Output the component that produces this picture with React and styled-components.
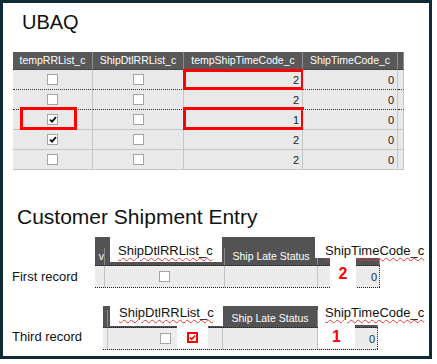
import React from 'react';
import styled, { createGlobalStyle } from 'styled-components';

const GlobalStyle = createGlobalStyle`
  html, body {
    margin: 0;
    padding: 0;
    background: #fff;
  }
  body {
    font-family: "Liberation Sans", Arial, sans-serif;
  }
`;

const Frame = styled.div`
  box-sizing: border-box;
  width: 432px;
  height: 359px;
  border: 3px solid #0f2b36;
  background: #fff;
  overflow: hidden;
`;

const Title = styled.h1`
  margin: ${p => p.$top}px 0 0 ${p => p.$left}px;
  font-size: ${p => p.$size}px;
  line-height: ${p => p.$line}px;
  font-weight: 400;
  color: #111;
`;

/* ---------- UBAQ grid ---------- */

const Grid = styled.div`
  display: grid;
  grid-template-columns: 80px 91px 119px 95px 6px;
  width: 391px;
  margin: 18px 0 0 10px;
  font-size: 10.5px;
`;

const HeadCell = styled.div`
  box-sizing: border-box;
  height: 18px;
  line-height: 17px;
  background: #595959;
  color: #fff;
  text-align: center;
  white-space: nowrap;
  overflow: hidden;
  border-right: 1px solid #8d8d8d;
  border-bottom: 1px dotted #333;
`;

const Cell = styled.div`
  position: relative;
  box-sizing: border-box;
  height: 20px;
  display: flex;
  align-items: center;
  justify-content: ${p => (p.$num ? 'flex-end' : 'center')};
  padding-right: ${p => (p.$num ? '3px' : '0')};
  background: #e9e9e9;
  color: #222;
  font-size: 11px;
  border-right: 1px solid #c6c6c6;
  border-bottom: 1px ${p => (p.$dotted ? 'dotted #333' : 'solid #c6c6c6')};
`;

const Mark = styled.span`
  position: absolute;
  top: ${p => p.$t}px;
  bottom: -1px;
  left: ${p => p.$l}px;
  right: ${p => p.$r}px;
  border: 3px solid #ff0000;
  pointer-events: none;
`;

const Box = styled.span`
  box-sizing: border-box;
  display: inline-flex;
  align-items: center;
  justify-content: center;
  width: 11px;
  height: 11px;
  background: #fff;
  border: 1px solid #a4a4a4;
`;

const RedBox = styled.span`
  box-sizing: border-box;
  display: inline-flex;
  align-items: center;
  justify-content: center;
  width: 11px;
  height: 11px;
  background: #fff;
  border: 2px solid #ff0000;
`;

const Check = ({ color = '#111' }) => (
  <svg width="8" height="7" viewBox="0 0 8 7">
    <path d="M1 3.6 L3 5.6 L7 1.2" fill="none" stroke={color} strokeWidth="1.8" />
  </svg>
);

const rows = [
  { a: false, c: 2, dotted: true, markC: -1 },
  { a: false, c: 2, dotted: true },
  { a: true, c: 1, markA: true, markC: -3 },
  { a: true, c: 2 },
  { a: false, c: 2 },
];

/* ---------- Customer Shipment Entry fragments ---------- */

const Record = styled.div`
  display: flex;
  align-items: flex-end;
  margin-top: ${p => p.$top}px;
`;

const RecordLabel = styled.div`
  box-sizing: border-box;
  width: ${p => p.$w}px;
  padding-left: 9px;
  height: 22px;
  line-height: ${p => p.$line}px;
  font-size: 13px;
  color: #111;
  flex-shrink: 0;
`;

const Piece = styled.div`
  position: relative;
  width: ${p => p.$w}px;
`;

const PieceHead = styled.div`
  display: grid;
  grid-template-columns: ${p => p.$cols};
  padding-top: ${p => p.$band}px;
  background: #535353;
  border-bottom: 1px dotted #222;
`;

const PieceHeadCell = styled.div`
  box-sizing: border-box;
  height: 17px;
  line-height: 17px;
  color: #fff;
  font-size: 10.5px;
  text-align: ${p => p.$align || 'center'};
  white-space: nowrap;
  overflow: hidden;
  border-right: 1px solid #8a8a8a;
`;

const PieceRow = styled.div`
  display: grid;
  grid-template-columns: ${p => p.$cols};
  height: 21px;
  background: #ececec;
  border-bottom: 1px dotted #222;
`;

const PieceCell = styled.div`
  box-sizing: border-box;
  display: flex;
  align-items: center;
  justify-content: ${p => (p.$num ? 'flex-end' : 'center')};
  padding-right: ${p => (p.$num ? '2px' : '0')};
  font-size: 11px;
  color: #1a2a4a;
  border-right: 1px ${p => (p.$last ? 'dotted #333' : 'solid #c4c4c4')};
`;

const Annot = styled.div`
  position: absolute;
  box-sizing: border-box;
  left: ${p => p.$x}px;
  top: ${p => p.$y}px;
  width: ${p => p.$w}px;
  height: ${p => p.$h}px;
  padding: ${p => p.$pt || 0}px 0 0 ${p => p.$pl || 0}px;
  background: #fff;
  font-size: 13px;
  line-height: 15px;
  color: #111;
  white-space: nowrap;
  display: ${p => (p.$center ? 'flex' : 'block')};
  align-items: center;
  justify-content: center;
`;

const Squiggle = styled.span`
  text-decoration: underline wavy #e23b3b;
  text-decoration-thickness: 1px;
  text-underline-offset: 2px;
`;

const RedNum = styled.span`
  color: #ff0000;
  font-weight: 700;
  font-size: 16px;
  line-height: 16px;
`;

export default function App() {
  return (
    <>
      <GlobalStyle />
      <Frame>
        <Title $top={7} $left={19} $size={20} $line={24}>UBAQ</Title>

        <Grid>
          <HeadCell>tempRRList_c</HeadCell>
          <HeadCell>ShipDtlRRList_c</HeadCell>
          <HeadCell>tempShipTimeCode_c</HeadCell>
          <HeadCell>ShipTimeCode_c</HeadCell>
          <HeadCell />
          {rows.map((r, i) => (
            <React.Fragment key={i}>
              <Cell $dotted={r.dotted}>
                <Box>{r.a && <Check />}</Box>
                {r.markA && <Mark $t={-3} $l={7} $r={15} />}
              </Cell>
              <Cell $dotted={r.dotted}>
                <Box />
              </Cell>
              <Cell $num $dotted={r.dotted}>
                {r.c}
                {r.markC !== undefined && <Mark $t={r.markC} $l={-1} $r={-2} />}
              </Cell>
              <Cell $num $dotted={r.dotted}>0</Cell>
              <Cell $dotted={r.dotted} />
            </React.Fragment>
          ))}
        </Grid>

        <Title $top={34} $left={14} $size={21} $line={26}>Customer Shipment Entry</Title>

        {/* header texts sitting under the white labels are left empty: they are covered in the picture */}
        <Record $top={7}>
          <RecordLabel $w={92} $line={22}>First record</RecordLabel>
          <Piece $w={285}>
            <PieceHead $cols="10px 120px 93px 62px" $band={11}>
              <PieceHeadCell $align="right">v</PieceHeadCell>
              <PieceHeadCell />
              <PieceHeadCell>Ship Late Status</PieceHeadCell>
              <PieceHeadCell />
            </PieceHead>
            <PieceRow $cols="10px 120px 93px 62px">
              <PieceCell />
              <PieceCell><Box /></PieceCell>
              <PieceCell />
              <PieceCell $num $last>0</PieceCell>
            </PieceRow>
            <Annot $x={15} $y={0} $w={112} $h={25} $pt={6} $pl={8}>
              <Squiggle>ShipDtlRRList_c</Squiggle>
            </Annot>
            <Annot $x={220} $y={-2} $w={114} $h={23} $pt={8} $pl={10}>
              <Squiggle>ShipTimeCode_c</Squiggle>
            </Annot>
            <Annot $x={235} $y={21} $w={26} $h={32} $center>
              <RedNum>2</RedNum>
            </Annot>
          </Piece>
        </Record>

        <Record $top={18}>
          <RecordLabel $w={100} $line={18}>Third record</RecordLabel>
          <Piece $w={275}>
            <PieceHead $cols="5px 115px 95px 60px" $band={4}>
              <PieceHeadCell />
              <PieceHeadCell />
              <PieceHeadCell>Ship Late Status</PieceHeadCell>
              <PieceHeadCell />
            </PieceHead>
            <PieceRow $cols="5px 115px 95px 60px">
              <PieceCell />
              <PieceCell><Box /></PieceCell>
              <PieceCell />
              <PieceCell $num $last>0</PieceCell>
            </PieceRow>
            <Annot $x={7} $y={-6} $w={113} $h={26} $pt={5} $pl={9}>
              <Squiggle>ShipDtlRRList_c</Squiggle>
            </Annot>
            <Annot $x={74} $y={20} $w={31} $h={22} $center>
              <RedBox><Check color="#ff0000" /></RedBox>
            </Annot>
            <Annot $x={215} $y={-4} $w={111} $h={23} $pt={3} $pl={7}>
              <Squiggle>ShipTimeCode_c</Squiggle>
            </Annot>
            <Annot $x={215} $y={19} $w={37} $h={23} $center>
              <RedNum>1</RedNum>
            </Annot>
          </Piece>
        </Record>
      </Frame>
    </>
  );
}
